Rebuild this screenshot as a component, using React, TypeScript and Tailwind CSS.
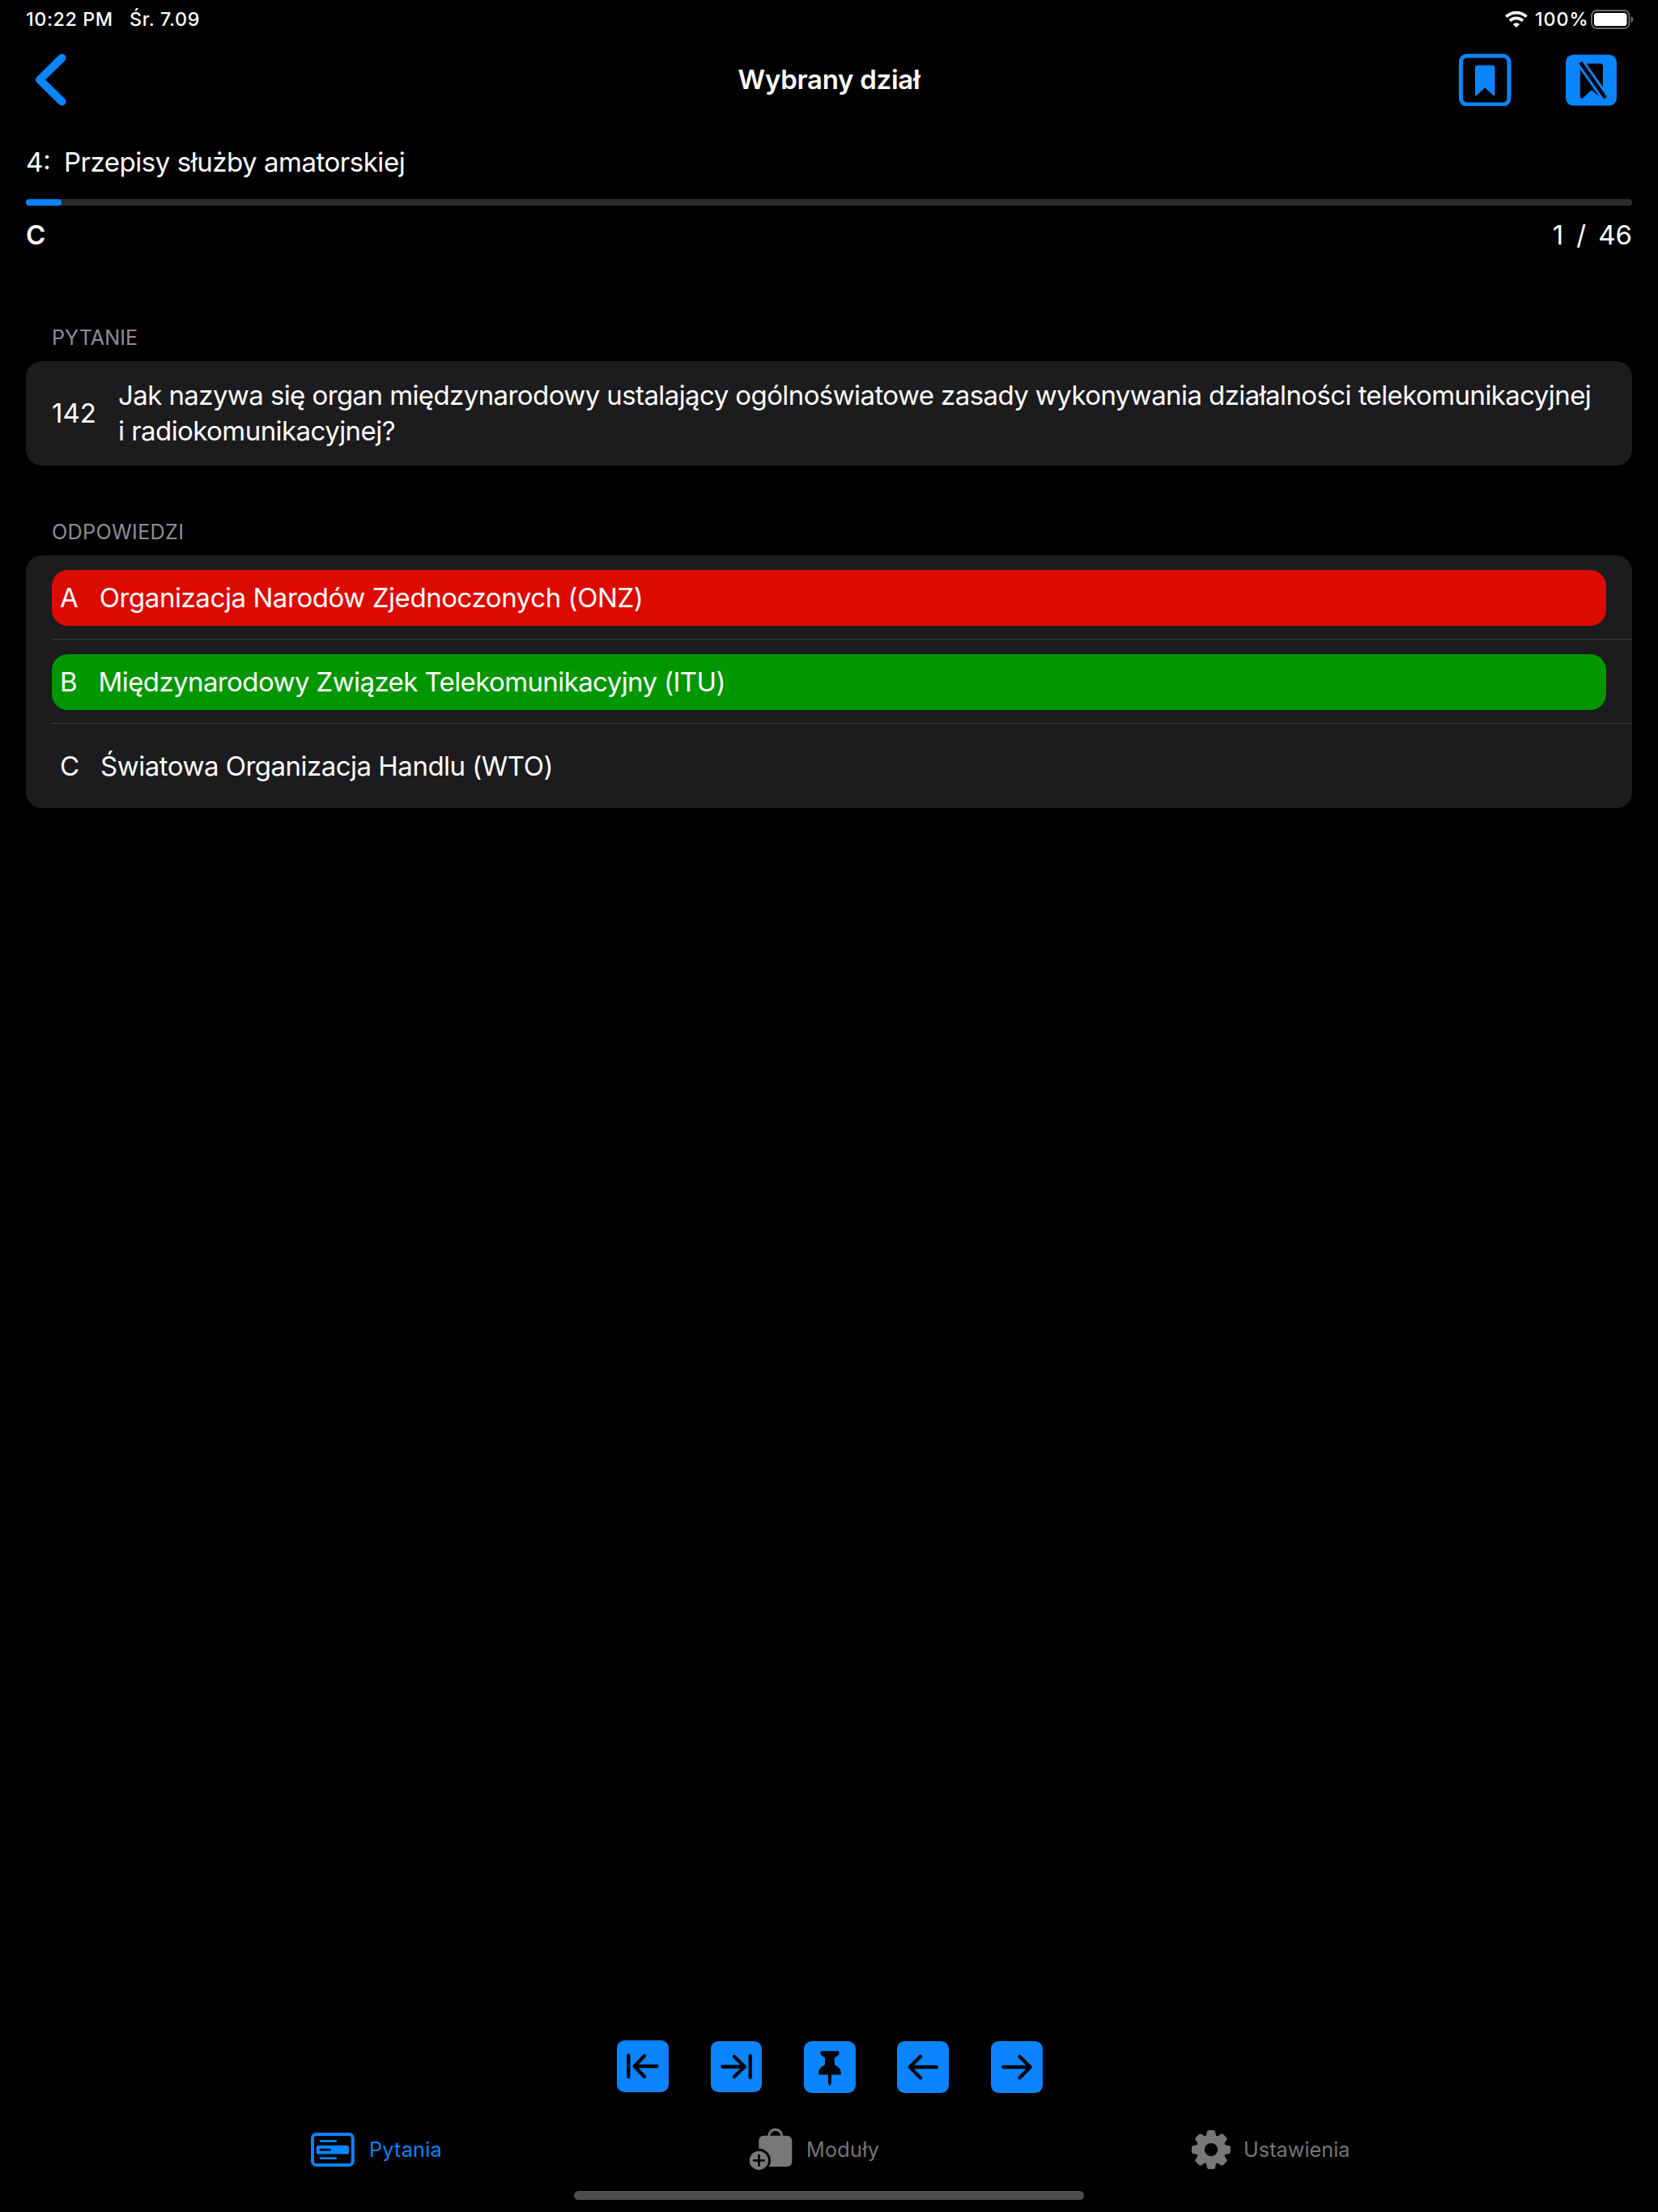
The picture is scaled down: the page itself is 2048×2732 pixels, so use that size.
import type { ReactNode } from "react";

const BLUE = "#0a84ff";
const GRAY = "#787878";

function Wifi() {
  return (
    <svg width="30" height="22" viewBox="0 0 30 22" fill="none" stroke="white" strokeWidth="3.8">
      <path d="M2.4 7.6 A18.2 18.2 0 0 1 27.6 7.6" />
      <path d="M7 12.6 A11.8 11.8 0 0 1 23 12.6" />
      <path d="M15 21 L10.8 16.9 A6.2 6.2 0 0 1 19.2 16.9 Z" fill="white" stroke="none" />
    </svg>
  );
}

function Battery() {
  return (
    <svg width="54" height="24" viewBox="0 0 54 24">
      <rect x="1" y="1" width="46.5" height="22" rx="6.5" fill="none" stroke="#6b6b6b" strokeWidth="1.9" />
      <rect x="4" y="4" width="40.5" height="16" rx="3.6" fill="white" />
      <path d="M49.6 8 Q52.6 9.4 52.6 12 Q52.6 14.6 49.6 16 Z" fill="#6b6b6b" />
    </svg>
  );
}

function BookmarkFrame() {
  return (
    <svg width="65" height="65" viewBox="0 0 65 65" fill={BLUE}>
      <rect x="2.5" y="3" width="59.5" height="60" rx="7.5" fill="none" stroke={BLUE} strokeWidth="5" />
      <path d="M20 17.5 Q20 14.5 23 14.5 H41.5 Q44.5 14.5 44.5 17.5 V50.5 Q44.5 52.8 42.6 52 L32.2 42.2 L21.9 52 Q20 52.8 20 50.5 Z" />
    </svg>
  );
}

function BookmarkSlash() {
  return (
    <svg width="63" height="65" viewBox="0 0 63 65">
      <rect y="1.5" width="63" height="63" rx="9.5" fill={BLUE} />
      <path d="M17.8 16 Q17.8 12.5 21 12.5 H42.5 Q46 12.5 46 16 V57 L31.8 45.3 L21.5 55 Q17.8 57 17.8 53 Z" fill="black" />
      <path d="M14.9 6.2 L52.4 59.8" stroke={BLUE} strokeWidth="10.6" />
      <path d="M18.2 11 L49 55" stroke="black" strokeWidth="4.6" />
    </svg>
  );
}

function Key({ size = 64, className = "", children }: { size?: number; className?: string; children: ReactNode }) {
  return (
    <svg className={className} width={size} height={size} viewBox={`0 0 ${size} ${size}`} fill="none" stroke="black" strokeWidth="4.3" strokeLinecap="round" strokeLinejoin="round">
      <rect width={size} height={size} rx="9.5" fill={BLUE} stroke="none" />
      {children}
    </svg>
  );
}

function CardIcon() {
  return (
    <svg width="54" height="42" viewBox="0 0 54 42" fill="none" stroke={BLUE} strokeLinecap="round">
      <rect x="2" y="2" width="49.8" height="38" rx="4.8" strokeWidth="4" />
      <path d="M12 10.4 H30.7 M12 31.6 H30.7" strokeWidth="2.8" />
      <rect x="6.7" y="15.8" width="40.4" height="10.8" rx="2.6" fill={BLUE} stroke="none" />
      <path d="M12.1 21.2 H23.4" stroke="black" strokeWidth="2.8" />
    </svg>
  );
}

function BagIcon() {
  return (
    <svg width="54" height="54" viewBox="0 0 54 54" fill={GRAY}>
      <rect x="12.3" y="9.8" width="41" height="38.2" rx="6" />
      <path d="M24.9 11 V10 A7.9 7.9 0 0 1 40.7 10 V11" fill="none" stroke={GRAY} strokeWidth="3.1" />
      <circle cx="12.4" cy="40.4" r="14.6" fill="black" />
      <circle cx="12.4" cy="40.4" r="11.6" />
      <path d="M6.2 40.4 H18.6 M12.4 34.2 V46.6" stroke="black" strokeWidth="2.8" strokeLinecap="round" />
    </svg>
  );
}

function Gear() {
  return (
    <svg width="48" height="48" viewBox="0 0 48 48" fill={GRAY}>
      <circle cx="24" cy="24" r="17.8" />
      {[0, 45, 90, 135, 180, 225, 270, 315].map((a) => (
        <path key={a} d="M15.6 9 Q18 7.6 18.4 5 L18.9 1.8 Q19.3 0 21.2 0 H26.8 Q28.7 0 29.1 1.8 L29.6 5 Q30 7.6 32.4 9 Z" transform={`rotate(${a} 24 24)`} />
      ))}
      <circle cx="24" cy="24" r="8.1" fill="black" />
    </svg>
  );
}

function Answer({ letter, box, line, children }: { letter: string; box: string; line: string; children: ReactNode }) {
  return (
    <div className="flex h-[104px] pl-8">
      <div className={`flex-1 pt-[18px] pr-8 ${line}`}>
        <div className={`flex h-[69px] rounded-[20px] pl-[10px] leading-[68px] ${box}`}>
          <span className="mr-[26px]">{letter}</span>
          {children}
        </div>
      </div>
    </div>
  );
}

export default function App() {
  return (
    <div className="flex h-[2732px] w-[2048px] flex-col overflow-hidden bg-black font-['Inter',sans-serif] text-[33px] leading-[44px] text-white">
      <div className="flex h-12 items-center pr-[29px] pl-8 text-[23.3px] leading-[48px] font-[450]">
        <span className="w-[128px] tracking-[0.6px]">10:22 PM</span>
        <span className="flex-1 tracking-[0.6px]">Śr. 7.09</span>
        <Wifi />
        <span className="w-[77px] pl-[8px] tracking-[0.95px]">100%</span>
        <Battery />
      </div>

      <div className="grid h-[100px] grid-cols-3 items-center">
        <svg className="ml-10" width="48" height="68" viewBox="0 0 48 68" fill="none" stroke={BLUE} strokeWidth="10" strokeLinecap="round" strokeLinejoin="round">
          <path d="M36.5 7.6 L9 34.5 L36.5 61.4" />
        </svg>
        <div className="text-center font-semibold tracking-[-0.27px]">Wybrany dział</div>
        <div className="flex justify-end gap-[67px] pr-[51px]">
          <BookmarkFrame />
          <BookmarkSlash />
        </div>
      </div>

      <div className="mt-[30px] flex px-8">
        <span className="w-[47px]">4:</span>
        <span className="tracking-[-0.47px]">Przepisy służby amatorskiej</span>
      </div>
      <div className="mx-8 mt-6 h-2 rounded-full bg-[#2c2c2e]">
        <div className="h-2 w-11 rounded-full bg-[#0a84ff]" />
      </div>
      <div className="mt-[14px] flex px-8">
        <span className="flex-1 font-semibold">C</span>
        <span>1</span>
        <span className="pr-[15px] pl-[16px]">/</span>
        <span>46</span>
      </div>

      <div className="mt-[89px] ml-16 text-[25.2px] leading-8 text-[#8d8d93]">PYTANIE</div>
      <div className="mx-8 mt-[13px] flex h-[129px] items-center rounded-[20px] bg-[#1c1c1e] pb-px pl-8">
        <span className="w-[82px] shrink-0">142</span>
        <div className="whitespace-nowrap">
          <div className="tracking-[-0.59px]">Jak nazywa się organ międzynarodowy ustalający ogólnoświatowe zasady wykonywania działalności telekomunikacyjnej</div>
          <div className="tracking-[-0.56px]">i radiokomunikacyjnej?</div>
        </div>
      </div>

      <div className="mt-[66px] ml-16 text-[25.2px] leading-8 tracking-[0.3px] text-[#8d8d93]">ODPOWIEDZI</div>
      <div className="mx-8 mt-[13px] rounded-[20px] bg-[#1c1c1e]">
        <Answer letter="A" box="bg-[#dd0a00]" line="border-b border-[#3d3d41]">
          <span className="tracking-[-0.43px]">Organizacja Narodów Zjednoczonych (ONZ)</span>
        </Answer>
        <Answer letter="B" box="bg-[#009600]" line="border-b border-[#3d3d41]">
          <span className="tracking-[-0.6px]">Międzynarodowy Związek Telekomunikacyjny (ITU)</span>
        </Answer>
        <Answer letter="C" box="" line="">
          <span className="tracking-[-0.51px]">Światowa Organizacja Handlu (WTO)</span>
        </Answer>
      </div>

      <div className="flex-1" />

      <div className="flex h-[65px] items-end gap-[51.5px] pl-[762px]">
        <Key className="self-start">
          <path d="M14.3 18.7 V45.3 M49.5 32 H22 M34 19 L21.8 32 L34 45" />
        </Key>
        <Key size={63} className="self-start translate-y-px">
          <path d="M14.5 31.5 H41.5 M29 19 L41.7 31.5 L29 44 M48.7 18.2 V45" />
        </Key>
        <Key className="ml-[0.5px]">
          <path d="M22 12.3 H42 Q43.6 12.3 43.6 14 V15 Q43.6 16.2 42.6 17 L37.6 21 L38 29.3 Q46 33.2 46 39.5 Q46 41.6 44 41.6 H33.9 V51.5 L32.3 55 H31.5 L29.9 51.5 V41.6 H20 Q17.9 41.6 17.9 39.5 Q17.9 33.2 25.9 29.3 L26.3 21 L21.3 17 Q20.3 16.2 20.3 15 V14 Q20.3 12.3 22 12.3 Z" fill="black" stroke="none" />
        </Key>
        <Key>
          <path d="M49 32 H16.5 M29 18.9 L15.8 32 L29 45.3" />
        </Key>
        <Key>
          <path d="M15.3 32 H48 M35.5 18.9 L48.6 32 L35.5 45.3" />
        </Key>
      </div>

      <div className="mt-[38px] flex h-16 items-center pl-[384px] text-[25.2px] tracking-[0.25px] text-[#757575]">
        <div className="flex w-[541px] items-center gap-[18px] text-[#0a84ff]">
          <CardIcon />
          Pytania
        </div>
        <div className="flex w-[547px] items-center gap-[17px]">
          <BagIcon />
          Moduły
        </div>
        <div className="flex items-center gap-[16px] tracking-[0.05px]">
          <Gear />
          Ustawienia
        </div>
      </div>
      <div className="mx-auto mt-[19px] mb-[15px] h-[11px] w-[630px] rounded-full bg-[#4d4d4d]" />
    </div>
  );
}
